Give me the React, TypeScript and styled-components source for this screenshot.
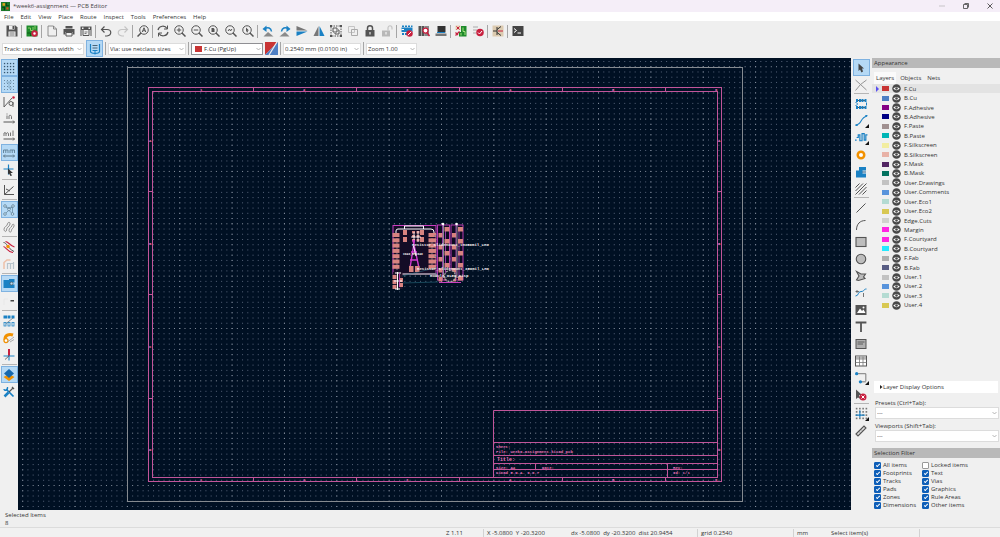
import React from 'react';
import styled, { createGlobalStyle, css } from 'styled-components';

const GlobalStyle = createGlobalStyle`
  *, *::before, *::after { box-sizing: border-box; }
  body { margin: 0; background: #efefef; }
  body, button, select, input { font-family: 'Open Sans', 'Noto Sans', sans-serif; font-size: 6px; line-height: 8px; color: #333; }
  button, select, input { margin: 0; padding: 0; border: 0; background: none; }
  ul { margin: 0; padding: 0; list-style: none; }
`;

/* ---------- icons (24 x 24 grid) ---------- */

const G = '#545454';
const L = '#c4c4c4';
const B = '#1a81c4';
const R = '#c8203f';
const O = '#f29100';

const line = (d: string, stroke = G, w = 2) => (
  <path d={d} fill="none" stroke={stroke} strokeWidth={w} />
);
const fill = (d: string, color = G) => <path d={d} fill={color} />;

const lens = (
  <>
    <circle cx="10" cy="10" r="8.500" fill="none" stroke={G} strokeWidth="2" />
    {line('M16 16L23 23', G, 3)}
  </>
);

const noEntry = (
  <>
    <circle cx="17" cy="17" r="6.5" fill={R} />
    {line('M13.5 20.5L20.5 13.5', '#fff', 2)}
  </>
);

const dots = [3, 9, 15, 21];

const icons: Record<string, React.ReactNode> = {
  save: (
    <>
      {fill('M1 1H19L23 5V23H1Z')}
      {fill('M6 1H17V9H6Z', '#efefef')}
      {fill('M13 2H16V8H13Z')}
      {fill('M5 13H19V23H5Z', '#efefef')}
      {line('M7 16H17M7 20H17', G, 1.5)}
    </>
  ),
  board: (
    <>
      {fill('M1 1H23V23H1Z', '#1d8a2b')}
      {line('M4 6H9V11H14V4M18 2V9', '#8fd16a', 2)}
      {line('M2 16H9V22', '#0c5c18', 2)}
      <circle cx="17" cy="17" r="4.5" fill="#fff" stroke={R} strokeWidth="4" />
    </>
  ),
  app: (
    <>
      {fill('M0 0H24V24H0Z', '#1d7a2b')}
      {line('M3 14H9V22M14 2V10H22', '#0b3d14', 3)}
      {fill('M4 3H11V10H4Z', '#e0a21b')}
      {fill('M14 14H20V20H14Z', '#d9531e')}
    </>
  ),
  page: <>{line('M4 2H15L21 8V22H4Z', '#777', 1.6)}{line('M15 2V8H21', '#777', 1.6)}</>,
  printer: (
    <>
      {fill('M5 2H19V7H5Z')}
      {fill('M1 8H23V19H19V14H5V19H1Z')}
      {line('M6 15H18V22H6Z', G, 2)}
    </>
  ),
  plotter: (
    <>
      {fill('M1 3H23V10H1Z')}
      {line('M2 10V22M22 10V22', G, 2)}
      {line('M6 10V21H18V10', G, 2)}
      {line('M9 14H15M9 17H13', G, 1.5)}
      {fill('M4 5H7V8H4ZM17 5H20V8H17Z', '#efefef')}
    </>
  ),
  undo: <>{line('M3 9H14C24 9 24 21 14 22H10', G, 2.4)}{line('M9 3L3 9L9 15', G, 2.4)}</>,
  redo: <>{line('M21 9H10C0 9 0 21 10 22H14', L, 2.4)}{line('M15 3L21 9L15 15', L, 2.4)}</>,
  find: (
    <>
      <circle cx="14" cy="10" r="8.500" fill="none" stroke={G} strokeWidth="2" />
      {line('M8 16L1 23', G, 3)}
      {line('M10.5 14L14 5.5L17.5 14M12 11.5H16', G, 2)}
    </>
  ),
  refresh: (
    <>
      {line('M2 10C4 1 16 0 20 7M22 14C20 23 8 24 4 17', G, 2.4)}
      {line('M21 1V8H14M3 23V16H10', G, 2)}
    </>
  ),
  zoomIn: <>{lens}{line('M5.5 10H14.5M10 5.5V14.5', G, 2)}</>,
  zoomOut: <>{lens}{line('M5.5 10H14.5', G, 2)}</>,
  zoomFit: <>{lens}{fill('M7 6H11L13 8V14H7Z')}</>,
  zoomObj: <>{lens}{line('M6 12L9 8L11 12L14 8', G, 2)}</>,
  zoomSel: <>{lens}{fill('M8 5L14 11H11L12 14L10 15L8 11Z')}</>,
  rotL: <>{fill('M3 23L23 23L12 14Z', '#8a8a8a')}{line('M5 8C12 3 18 6 19 13', B, 3)}{fill('M1 8L9 1V14Z', B)}</>,
  rotR: <>{fill('M1 23L21 23L12 14Z', '#8a8a8a')}{line('M19 8C12 3 6 6 5 13', B, 3)}{fill('M23 8L15 1V14Z', B)}</>,
  flipV: <>{fill('M1 2L23 11H1Z', '#777')}{fill('M1 22L23 13H1Z', B)}</>,
  mirror: <>{fill('M11 2V22H1Z', '#777')}{fill('M13 2V22H23Z', B)}</>,
  group: (
    <>
      <rect x="2" y="2" width="20" height="20" fill="none" stroke={G} strokeWidth="2" strokeDasharray="3 2" />
      {line('M6 6H14V14H6Z', G, 2)}
      {line('M16 10H18V18H10V16', G, 2)}
      {fill('M0 0H4V4H0ZM20 0H24V4H20ZM0 20H4V24H0ZM20 20H24V24H20Z')}
    </>
  ),
  ungroup: <>{line('M3 3H15V15H3Z', L, 2)}{line('M9 9H21V21H9Z', '#aaa', 2)}</>,
  lock: <>{line('M7 11V6C7 0 17 0 17 6V11', G, 3)}{fill('M3 10H21V23H3Z')}{fill('M11 14H13V19H11Z', '#fff')}</>,
  unlock: <>{line('M14 11V6C14 0 22 0 22 6V9', L, 2.4)}{fill('M2 11H18V23H2Z', '#b8b8b8')}{fill('M9 14H11V19H9Z', '#fff')}</>,
  fpEdit: (
    <>
      {fill('M1 5H23V14H1Z', B)}
      {fill('M2 1H6V4H2ZM8 1H12V4H8ZM14 1H18V4H14ZM20 1H23V4H20ZM2 16H6V20H2ZM8 16H12V20H8Z', B)}
      {line('M1 9H6', '#fff', 2)}
      {noEntry}
    </>
  ),
  fpLib: (
    <>
      {fill('M1 2H7V22H1ZM8 2H13V22H8Z')}
      {fill('M14 2H22V22H14Z', '#888')}
      <circle cx="15" cy="11" r="5" fill="#fff" stroke={R} strokeWidth="2.5" />
      {line('M18 15L23 22', R, 3)}
    </>
  ),
  laptop: <>{fill('M5 2H21V15H5Z', '#333')}{fill('M1 17H23V22H1Z', '#777')}{line('M4 15H20', B, 2)}</>,
  sync: (
    <>
      {fill('M1 1H11V10H1Z', '#e5d2b5')}
      {fill('M12 2H23V23H8V14H12Z', '#1d8a2b')}
      {line('M3 3L9 9M9 3L3 9', R, 2)}
      {line('M1 15L6 20M1 21L9 13', R, 2.4)}
      {line('M16 5V13H20V20M12 16V21', '#a6e07d', 2)}
    </>
  ),
  drc: (
    <>
      {line('M2 4H12M2 10H10M2 16H8', '#aaa', 2)}
      <circle cx="16" cy="15" r="7.5" fill={R} />
      {line('M12 15L15 18L20 12', '#fff', 2)}
    </>
  ),
  schematic: (
    <>
      {fill('M1 1H23V23H1Z', '#dccbb0')}
      {line('M10 4V20M10 12H2M10 9L18 3M10 15L18 21', '#333', 2)}
      {line('M12 12H22', R, 2)}
    </>
  ),
  terminal: <>{fill('M1 2H23V22H1Z', '#444')}{line('M4 7L9 11L4 15M11 16H18', '#fff', 2)}</>,
  trackWidth: <>{line('M3 2V17C3 22 21 22 21 17V2', B, 2.4)}{line('M7 5H17M7 10H17', '#4a6477', 2)}{line('M7 15H17M12 15V23', B, 2)}</>,
  grid: (
    <>
      {dots.map((x) => dots.map((y) => <rect key={`${x}-${y}`} x={x - 1.2} y={y - 1.2} width="2.6" height="2.6" fill="#35556e" />))}
    </>
  ),
  gridOver: (
    <>
      {dots.map((x) => dots.map((y) => <rect key={`${x}-${y}`} x={x - 1} y={y - 1} width="2" height="2" fill="#6d8ca3" />))}
      {line('M6 6L18 6M12 6V18L18 18', '#7ba3c0', 1.6)}
    </>
  ),
  polar: (
    <>
      {line('M2 2V22M2 22L18 4', G, 1.8)}
      <circle cx="16" cy="15" r="4" fill="none" stroke={G} strokeWidth="1.8" />
      {line('M20 12V22', G, 1.8)}
      <circle cx="21" cy="3" r="2.5" fill={R} />
    </>
  ),
  in: <>{line('M8 5V12M8 1V3M12 12V6C12 4 17 4 17 7V12', '#666', 1.8)}{line('M1 18H23', '#444', 1.8)}{line('M20 15L23 18L20 21', '#444', 1.4)}</>,
  mil: <>{line('M2 12V6C5 4 6 6 6 8V12M6 8C8 4 11 5 11 8V12M15 5V12M20 1V12', '#666', 1.8)}{line('M1 18H23', '#444', 1.8)}{line('M20 15L23 18L20 21', '#444', 1.4)}</>,
  mm: <>{line('M1 12V6H10V12M5.5 6V12M14 12V6H23V12M18.5 6V12', '#5d7f95', 1.8)}{line('M1 18H23', '#4a6477', 1.8)}{line('M4 15L1 18L4 21M20 15L23 18L20 21', '#4a6477', 1.4)}</>,
  cursor: <>{line('M11 1V21M1 10H21', B, 2.4)}{fill('M10 9L20 18H15L18 23L15 24L12 19L10 21Z', '#333')}</>,
  angle: <>{line('M3 2V21H22M3 21L21 5M6 10L14 14', G, 2)}</>,
  ratsnest: (
    <>
      {line('M5 5L18 19M19 5L5 19M5 5C10 8 14 8 19 5M19 5V18', '#5d7f95', 1.4)}
      {[[4, 4], [20, 4], [4, 20], [19, 20], [12, 11]].map(([x, y]) => (
        <circle key={`${x}-${y}`} cx={x} cy={y} r="2.6" fill="#d5eafa" stroke="#5d7f95" strokeWidth="1.6" />
      ))}
    </>
  ),
  ratsCurve: <>{line('M2 17C2 10 8 12 9 6C10 1 15 2 14 6C13 12 7 12 7 18C7 22 3 22 2 17ZM12 19C12 13 17 14 18 9C19 5 23 6 22 10C21 15 17 15 17 19C17 23 12 23 12 19Z', '#777', 1.6)}</>,
  contrast: <>{line('M1 3C8 3 8 14 22 21', G, 2)}{line('M5 1C12 2 13 9 23 12', R, 2.2)}{line('M1 11C6 12 9 22 20 23', R, 2.2)}<circle cx="10" cy="11" r="3.500" fill={O} /></>,
  netHi: <>{line('M2 22V9L8 4H15', '#edc0a8', 3)}{line('M9 22V11H20M15 22V11M21 22V8', '#b8c4cc', 2.4)}</>,
  zoneFill: <>{fill('M1 4H12V2H23V9H17V13H23V20H1Z', B)}<circle cx="17" cy="11" r="3" fill="#b7dcf5" stroke={G} strokeWidth="1.5" /></>,
  zoneOut: <>{line('M2 20V8H10', '#e5e5e5', 1.5)}{fill('M15 10H22V13H15Z', '#444')}</>,
  padSketch: <>{fill('M1 1H8V7H1ZM9 1H15V7H9ZM17 1H23V7H17Z', B)}{line('M5 18L20 6', '#777', 1.6)}<rect x="2" y="15" width="4" height="7" fill="none" stroke={B} strokeWidth="1.5" /><rect x="10" y="15" width="4" height="7" fill="none" stroke={B} strokeWidth="1.5" /><rect x="18" y="15" width="4" height="7" fill="none" stroke={B} strokeWidth="1.5" /></>,
  viaSketch: <>{line('M4 16C3 6 12 3 20 6', O, 6)}<circle cx="6" cy="17" r="4" fill="#fff" stroke={O} strokeWidth="2.5" />{line('M9 20L22 10M14 20L22 15', '#999', 1.6)}</>,
  trackSketch: <>{line('M12 0V14', R, 4)}{line('M1 14H23M12 14V23', B, 2.2)}{line('M12 14L4 21', G, 1.6)}</>,
  layersMgr: <>{fill('M12 10L23 16L12 24L1 16Z', O)}{fill('M12 0L22 9L12 18L2 9Z', '#1568ad')}</>,
  tools: <>{line('M6 6L21 21', B, 3.4)}{line('M2 6C2 10 10 10 9 2', B, 2.6)}{line('M20 4L12 12', G, 2.2)}{line('M11 13L3 21', B, 5)}{line('M18 2L22 6', G, 2.6)}</>,
  select: <>{fill('M7 3L18 13H14L16 19L13 21L10 15L7 18Z', '#444')}</>,
  ratsLocal: <>{line('M1 2L11 11L23 2M1 23L11 11L23 22', '#8a8a8a', 1.8)}</>,
  footprint: <>{line('M2 5H22M2 19H22', G, 2)}{fill('M2 2H6V8H2ZM8 2H12V8H8ZM13 2H17V8H13ZM19 2H23V8H19ZM2 16H6V22H2ZM8 16H12V22H8ZM13 16H17V22H13ZM19 16H23V22H19Z', B)}{line('M1 9C6 9 6 15 1 15M23 9V15', B, 2)}</>,
  route: <>{line('M1 20C14 21 8 6 22 4', B, 2)}{line('M5 21H1M19 3H23', B, 2)}</>,
  tune: <>{line('M0 17H3M3 12H6V7H9V18H13V5H17V17H20V7H23', B, 2.2)}</>,
  via: <circle cx="12" cy="12" r="6.5" fill="#fff" stroke={O} strokeWidth="5" />,
  zone: <>{fill('M2 23V9H8V2H22V9H15V15H22V23Z', B)}{line('M14 12H22', '#1d5f91', 2)}</>,
  keepout: <>{line('M1 9L9 1M1 16L16 1M1 23L23 1M8 23L23 8M15 23L23 15', G, 2)}</>,
  line: line('M3 21L21 3', G, 2),
  arc: line('M3 22C3 10 10 3 21 3', G, 2),
  rect: <rect x="2" y="3" width="20" height="18" fill="#bdbdbd" stroke={G} strokeWidth="2.2" />,
  circle: <circle cx="12" cy="12" r="9.5" fill="#bdbdbd" stroke={G} strokeWidth="2.2" />,
  polygon: <path d="M3 3L12 8H21L17 14L20 17L7 21L3 20L8 12Z" fill="#bdbdbd" stroke={G} strokeWidth="2.2" />,
  bezier: <>{line('M1 18C8 18 5 9 12 9C20 9 16 4 23 4', B, 2)}{line('M4 6V12M17 12V20M1 9H8', G, 1.6)}</>,
  image: <>{fill('M1 2H23V22H1Z')}{fill('M4 18L10 9L14 14L17 11L21 18Z', '#fff')}<circle cx="17" cy="7" r="2" fill="#fff" /></>,
  text: line('M3 5V3H21V5M12 3V22', G, 3.6),
  textbox: <><rect x="2" y="3" width="20" height="18" fill="#b0b0b0" stroke={G} strokeWidth="2" />{line('M5 8H19M5 12H16', '#555', 1.8)}</>,
  table: <><rect x="1" y="2" width="22" height="20" fill="#fff" stroke={G} strokeWidth="2" />{fill('M2 3H22V7H2Z', '#b5b5b5')}{line('M1 8H23M1 15H23M9 3V22M16 3V22', '#777', 1.6)}</>,
  dimension: <>{line('M3 5H20V19', '#777', 1.8)}{line('M9 20H20', '#777', 1.8)}<circle cx="3" cy="5" r="3" fill={B} /><circle cx="10" cy="20" r="3" fill={B} /></>,
  delete: <>{fill('M2 1L14 12H8L11 20L6 17L2 20Z', G)}<circle cx="16" cy="16" r="7" fill={R} />{line('M13 13L19 19M19 13L13 19', '#fff', 2)}</>,
  gridOrigin: <>{dots.map((x) => dots.map((y) => <rect key={`${x}-${y}`} x={x - 1.5} y={y - 1.5} width="3" height="3" fill="#777" />))}{line('M9 6V20M1 15H18', B, 2)}</>,
  measure: <><path d="M2 18L18 2L22 6L6 22Z" fill="#ddd" stroke={G} strokeWidth="2.2" />{line('M8 13L10 15M12 9L14 11', G, 1.6)}</>,
};

const IconSvg = styled.svg<{ $size: number }>`
  display: block;
  width: ${(p) => p.$size}px;
  height: ${(p) => p.$size}px;
`;

const Icon = ({ name, size = 12 }: { name: string; size?: number }) => (
  <IconSvg $size={size} viewBox="0 0 24 24" aria-hidden="true">
    {icons[name]}
  </IconSvg>
);

/* ---------- window chrome ---------- */

const Window = styled.div`
  display: flex;
  flex-direction: column;
  min-height: 100vh;
`;

const TitleBar = styled.header`
  display: flex;
  align-items: center;
  height: 12px;
  padding: 0 4px 0 1px;
  gap: 3px;
  background: #f5eef8;
`;

const WindowTitle = styled.span`
  flex: 1;
  color: #444;
`;

const WindowControls = styled.div`
  display: flex;
  gap: 12px;
`;

const WindowButton = styled.button`
  display: grid;
  place-items: center;
  width: 12px;
  height: 10px;
`;

const MenuBar = styled.nav`
  display: flex;
  align-items: center;
  gap: 7px;
  height: 9px;
  padding: 0 4px;
  background: #fff;
`;

const MenuItem = styled.button`
  white-space: nowrap;
`;

const Toolbars = styled.div`
  background: #efefef;
  height: 37px;
`;

const Toolbar = styled.div`
  display: flex;
  align-items: center;
  height: 20px;
  padding-left: 3px;
`;

const groupLine = css`
  &::before {
    content: '';
    width: 1px;
    height: 13px;
    margin: 0 1px;
    background: #a5a5a5;
  }
`;

const ToolGroup = styled.div<{ $divided?: boolean }>`
  display: flex;
  align-items: center;
  ${(p) => p.$divided && groupLine}
`;

const ToolButton = styled.button<{ $active?: boolean }>`
  position: relative;
  display: grid;
  place-items: center;
  flex: none;
  width: 17px;
  height: 17px;
  border: 1px solid ${(p) => (p.$active ? '#7fb2e0' : 'transparent')};
  background: ${(p) => (p.$active ? '#b5d9f5' : 'transparent')};
`;

const MoreMark = styled.i`
  position: absolute;
  right: 0;
  bottom: 0;
  border: 2px solid;
  border-color: transparent #111 #111 transparent;
`;

const OptionsBar = styled.div`
  display: flex;
  align-items: center;
  gap: 2px;
  height: 15px;
  padding: 0 2px;
`;

const Divider = styled.span`
  width: 1px;
  height: 13px;
  background: #a5a5a5;
`;

const SelectWrap = styled.div<{ $width?: number; $strong?: boolean }>`
  position: relative;
  display: flex;
  align-items: center;
  width: ${(p) => (p.$width ? `${p.$width}px` : '100%')};
  height: 12px;
  border: 1px solid ${(p) => (p.$strong ? '#8f8f93' : '#dcdcdc')};
  background: #fff;
  & > svg {
    position: absolute;
    right: 1px;
    pointer-events: none;
  }
`;

const Select = styled.select<{ $indent?: boolean }>`
  appearance: none;
  width: 100%;
  height: 10px;
  padding: 0 0 0 ${(p) => (p.$indent ? 12 : 1)}px;
  outline: 0;
`;

const SelectSwatch = styled.span`
  position: absolute;
  left: 3px;
  width: 7px;
  height: 6px;
  background: #c83434;
`;

const Chevron = () => (
  <svg width="5" height="4" viewBox="0 0 5 4" aria-hidden="true">
    <path d="M0.5 1L2.5 3L4.5 1" fill="none" stroke="#999" strokeWidth="0.7" />
  </svg>
);

const Dropdown = ({ label, value, width, swatch }: { label: string; value: string; width?: number; swatch?: boolean }) => (
  <SelectWrap $width={width} $strong={swatch}>
    {swatch && <SelectSwatch />}
    <Select id={label} aria-label={label} $indent={swatch} defaultValue={value}>
      <option>{value}</option>
    </Select>
    <Chevron />
  </SelectWrap>
);

/* ---------- workspace ---------- */

const Workspace = styled.main`
  display: flex;
  flex: 1;
`;

const SideBar = styled.div<{ $wide?: boolean }>`
  display: flex;
  flex-direction: column;
  align-items: center;
  flex: none;
  width: ${(p) => (p.$wide ? 20 : 18)}px;
  padding-top: 1px;
  background: #f0f0f0;
`;

const SideDivider = styled.span<{ $wide?: boolean }>`
  width: 15px;
  height: 1px;
  margin: ${(p) => (p.$wide ? '0 0 1px' : '1px 0')};
  background: #b5b5b5;
`;

const BoardArea = styled.div`
  position: relative;
  flex: 1;
  min-width: 0;
  background: #001023;
`;

const BoardSvg = styled.svg`
  position: absolute;
  inset: 0;
  width: 100%;
  height: 100%;
`;

const PINK = '#c2559a';

const sheetText = (x: number, y: number, s: string, size = 4) => (
  <text key={`${x}-${y}`} x={x} y={y} fontSize={size} fontWeight="700" fill="#ea74bb" fontFamily="'Liberation Mono', monospace">
    {s}
  </text>
);

const pad = (x: number, y: number, w = 5, h = 4) => (
  <rect key={`p${x}-${y}`} x={x} y={y} width={w} height={h} fill="#d88380" />
);

const silkText = (x: number, y: number, s: string, size = 4) => (
  <text x={x} y={y} fontSize={size} fontWeight="700" fill="#f3ecef" fontFamily="'Liberation Mono', monospace">
    {s}
  </text>
);

const PITCH = 5.235;

const GridDots = () => (
  <g strokeDasharray={`1 ${PITCH - 1}`}>
    {Array.from({ length: 86 }, (_, i) => {
      const y = 61.5 + i * PITCH;
      const major = i % 10 === 1;
      return <path key={i} d={`M22.200 ${y}H851`} stroke={major ? '#8a94a2' : '#56647a'} strokeWidth={1} />;
    })}
    {Array.from({ length: 16 }, (_, i) => {
      const x = 22.7 + i * PITCH * 10;
      return <path key={i} d={`M${x} 61V510`} stroke="#8a94a2" strokeWidth={1} />;
    })}
  </g>
);

const Footprints = () => (
  <g>
    <rect x="393" y="225.5" width="43" height="48.5" fill="#140c26" stroke="#c93fc0" strokeWidth="1" />
    <path d="M396 233V231Q396 229 398 229H431Q434 229 434 232V233M404.5 229V226H423.5V229" fill="none" stroke="#fff" strokeWidth="1" />
    <path d="M397 238V270M432 238V270" stroke="#cfc8d8" strokeWidth="0.5" />
    {[0, 1, 2, 3, 4, 5, 6].map((i) => pad(392.5, 233 + i * 5.3, 7, 4))}
    {[0, 1, 2, 3, 4, 5, 6].map((i) => pad(428.5, 233 + i * 5.3, 7.5, 4))}
    {[403, 420].map((x) => [230, 237].map((y) => pad(x, y, 4, 5)))}
    {[412, 416.5].map((x) => [231, 235, 239].map((y) => pad(x, y, 3, 2.5)))}
    <path d="M414 232V240M418 231V242M411 237H421" stroke="#fff" strokeWidth="0.8" />
    <path d="M414.500 240L410 268M413 240L419 268M411 252H417M410 260H418" fill="none" stroke="#d23bd0" strokeWidth="1.4" />
    <path d="M413.500 246L416 256" stroke="#fff" strokeWidth="1" />
    {pad(409, 266, 4.5, 6)}
    {pad(415, 266, 4.5, 6)}
    {silkText(403, 255, 'XIAO_RP2040', 3)}
    <path d="M397 273H436V275H397Z" fill="#8c8093" />
    <path d="M434 236L458 233M434 256L459 262M436 269L462 250M402 283L438 282M436 274L462 240M402 276L460 262" stroke="#2e7c90" strokeWidth="0.5" fill="none" />
    {[437.5, 451].map((x) => (
      <g key={x}>
        <rect x={x} y="225" width="12" height="55" fill="#0d0b22" stroke="#c93fc0" strokeWidth="0.9" />
        <path d={`M${x + 5} 225V280M${x + 8} 228V276`} stroke="#8e3aa4" strokeWidth="1" />
        <path d={`M${x + 6} 224V278`} stroke="#ddd" strokeWidth="0.6" />
        {[227, 239, 251, 263, 276].map((y) => pad(x + 7, y, 5, 4.5))}
        {[233, 245, 257, 268, 277].map((y) => pad(x + 1, y, 4, 4.5))}
        <circle cx={x + 5.5} cy="224" r="1.3" fill="#fff" />
      </g>
    ))}
    <circle cx="450" cy="276" r="5.5" fill="#101a2b" stroke="#aaa" strokeWidth="1.2" strokeDasharray="2 1" />
    <path d="M439 282.500H461" stroke="#c93fc0" strokeWidth="1" />
    {silkText(412, 246, 'Resistor_SlideMount_1M350mil_LH0')}
    {silkText(417, 270, 'Resistor_SlideMount_350mil_LH0')}
    {silkText(430, 277, 'Module_OLED_Disp')}
    <rect x="393" y="272" width="9.5" height="17" fill="#23152c" />
    {[0, 1, 2].map((i) => pad(392.5, 275 + i * 5, 4, 4))}
    {[0, 1].map((i) => pad(399, 278 + i * 5, 4, 4))}
    <path d="M397.500 272V290M395 273H401M394 281H402M395 289H400" stroke="#fff" strokeWidth="1" />
    <path d="M399.500 273V287" stroke="#c93fc0" strokeWidth="0.8" />
  </g>
);

const Board = () => (
  <BoardArea>
    <BoardSvg viewBox="18 58 833 452" preserveAspectRatio="xMidYMid slice" role="img" aria-label="Board canvas">
      <GridDots />
      <rect x="127.5" y="67.5" width="615" height="434" fill="none" stroke="#858a90" />
      <g fill="none" stroke={PINK}>
        <rect x="148.500" y="87.500" width="573" height="394" />
        <rect x="152.500" y="91.500" width="565" height="386" />
        {[253.5, 356.5, 459.5, 562.5, 665.5].map((x) => (
          <path key={x} d={`M${x} 87V91M${x} 478V482`} />
        ))}
        {[191.5, 294.5, 398.5].map((y) => (
          <path key={y} d={`M148 ${y}H152M718 ${y}H722`} />
        ))}
        <path d="M493.500 477V410.500H717M494 442.500H717M494 455.500H717M494 463.500H717M494 469.500H717M535.500 463V469M667.500 463V477" />
      </g>
      {['1', '2', '3', '4', '5', '6'].map((s, i) => [91, 481].map((y) => sheetText(200 + i * 103, y, s)))}
      {['A', 'B', 'C', 'D'].map((s, i) => [149, 718].map((x) => sheetText(x, 142 + i * 103, s)))}
      {sheetText(496, 448, 'Sheet:')}
      {sheetText(496, 453, 'File: week6-assignment.kicad_pcb')}
      {sheetText(497, 461, 'Title:', 5)}
      {sheetText(496, 469, 'Size: A4')}
      {sheetText(542, 469, 'Date:')}
      {sheetText(673, 469, 'Rev:')}
      {sheetText(496, 474, 'KiCad E.D.A. 9.0.7')}
      {sheetText(673, 474, 'Id: 1/1')}
      <Footprints />
    </BoardSvg>
  </BoardArea>
);

/* ---------- appearance panel ---------- */

const Panel = styled.aside`
  display: flex;
  flex-direction: column;
  flex: none;
  width: 129px;
  padding-left: 1px;
  background: #f0f0f0;
`;

const PanelHeader = styled.h2`
  margin: 0;
  padding: 0 2px;
  font-size: 6px;
  font-weight: 400;
  line-height: 10px;
  background: #b9b9b9;
`;

const Tabs = styled.div`
  display: flex;
  gap: 2px;
  padding: 4px 2px 0;
`;

const Tab = styled.button<{ $active?: boolean }>`
  height: 12px;
  padding: 0 2px;
  background: ${(p) => (p.$active ? '#fafafa' : 'transparent')};
`;

const LayerList = styled.ul`
  display: grid;
  grid-auto-rows: 1fr;
  height: 226px;
  flex: none;
`;

const LayerRow = styled.li<{ $active?: boolean }>`
  display: flex;
  align-items: center;
  min-height: 0;
  padding-left: 4px;
  background: ${(p) => (p.$active ? '#e3e3e3' : 'transparent')};
`;

const ActiveMark = styled.span<{ $active?: boolean }>`
  width: 6px;
  height: 6px;
  border: 3px solid transparent;
  border-left-color: ${(p) => (p.$active ? '#5a50f0' : 'transparent')};
`;

const Swatch = styled.span<{ $color: string }>`
  width: 7px;
  height: 5px;
  background: ${(p) => p.$color};
`;

const EyeButton = styled.button`
  width: 9px;
  height: 9px;
  margin: 0 3px;
`;

const PanelBody = styled.div`
  display: flex;
  flex-direction: column;
  flex: 1;
  padding-bottom: 3px;
`;

const DisplayOptions = styled.button`
  display: flex;
  align-items: center;
  height: 12px;
  margin: auto 2px 6px;
  padding-left: 5px;
  background: #fff;
`;

const Field = styled.div`
  padding: 0 1px 0 3px;
  margin-bottom: 3px;
  label { display: block; }
`;

const FilterGrid = styled.div`
  display: grid;
  grid-template-columns: 48px 1fr;
  padding: 3px 2px 1px;
`;

const CheckLabel = styled.label`
  display: flex;
  align-items: center;
  gap: 2px;
  height: 8px;
  white-space: nowrap;
`;

const CheckBox = styled.input`
  appearance: none;
  display: grid;
  place-items: center;
  width: 7px;
  height: 7px;
  border: 1px solid #999;
  border-radius: 1px;
  background: #fff;
  &:checked { background: #0f5fb8; border-color: #0f5fb8; }
  &:checked::after {
    content: '';
    width: 4px;
    height: 2px;
    border: solid #fff;
    border-width: 0 0 1px 1px;
    transform: rotate(-45deg);
  }
`;

const layers: [string, string][] = [
  ['F.Cu', '#c83434'], ['B.Cu', '#4d7fc4'], ['F.Adhesive', '#840084'], ['B.Adhesive', '#000084'],
  ['F.Paste', '#a09090'], ['B.Paste', '#00b5b5'], ['F.Silkscreen', '#f2eda1'], ['B.Silkscreen', '#e8b2a7'],
  ['F.Mask', '#532663'], ['B.Mask', '#02725f'], ['User.Drawings', '#c2c2c2'], ['User.Comments', '#5994dc'],
  ['User.Eco1', '#b4dbd2'], ['User.Eco2', '#d8c852'], ['Edge.Cuts', '#d0d2cd'], ['Margin', '#ff26e2'],
  ['F.Courtyard', '#ff26e2'], ['B.Courtyard', '#26e9ff'], ['F.Fab', '#afafaf'], ['B.Fab', '#585d84'],
  ['User.1', '#c2c2c2'], ['User.2', '#5994dc'], ['User.3', '#b4dbd2'], ['User.4', '#d8c852'],
];

const filters = [
  'All items', 'Locked items', 'Footprints', 'Text', 'Tracks', 'Vias',
  'Pads', 'Graphics', 'Zones', 'Rule Areas', 'Dimensions', 'Other items',
];

const Eye = () => (
  <svg width="9" height="9" viewBox="0 0 18 18" aria-hidden="true">
    <circle cx="9" cy="9" r="8.500" fill="#4a4a4a" />
    <path d="M2.500 9Q9 2.500 15.500 9Q9 15.500 2.500 9Z" fill="#fff" />
    <circle cx="9" cy="9" r="2.600" fill="#4a4a4a" />
  </svg>
);

/* ---------- footer ---------- */

const MessagePanel = styled.section`
  height: 18px;
  padding: 1px 5px;
  border-bottom: 1px solid #dcdcdc;
  background: #efefef;
`;

const StatusBar = styled.footer`
  display: grid;
  grid-template-columns: 443fr 41fr 84fr 130fr 96fr 34fr 92fr 80fr;
  height: 9px;
  padding-top: 1px;
  background: #f1f1f1;
  white-space: pre;
`;

const StatusCell = styled.span<{ $line?: boolean }>`
  padding-left: 3px;
  border-right: 1px solid ${(p) => (p.$line ? '#d2d2d2' : 'transparent')};
`;

const topGroups = [
  ['save'], ['board'], ['page', 'printer', 'plotter'], ['undo', 'redo'], ['find'],
  ['refresh', 'zoomIn', 'zoomOut', 'zoomFit', 'zoomObj', 'zoomSel'],
  ['rotL', 'rotR', 'flipV', 'mirror', 'group', 'ungroup', 'lock', 'unlock'],
  ['fpEdit', 'fpLib', 'laptop'], ['sync', 'drc'], ['schematic'], ['terminal'],
];

const leftGroups = [
  ['grid', 'gridOver', 'polar', 'in', 'mil', 'mm', 'cursor'], ['angle'], ['ratsnest', 'ratsCurve'],
  ['contrast', 'netHi'], ['zoneFill', 'zoneOut'], ['padSketch', 'viaSketch', 'trackSketch'], ['layersMgr', 'tools'],
];

const rightGroups = [
  ['select', 'ratsLocal'], ['footprint', 'route', 'tune', 'via', 'zone', 'keepout'],
  ['line', 'arc', 'rect', 'circle', 'polygon', 'bezier', 'image', 'text', 'textbox', 'table', 'dimension', 'delete'],
  ['gridOrigin', 'measure'],
];

const active = new Set(['grid', 'gridOver', 'mm', 'ratsnest', 'zoneFill', 'layersMgr', 'select']);
const withMore = new Set(['route', 'tune', 'dimension', 'gridOrigin']);

const Tools = ({ names }: { names: string[] }) => (
  <>
    {names.map((n) => (
      <ToolButton key={n} $active={active.has(n)} aria-label={n}>
        <Icon name={n} size={withMore.has(n) ? 13 : 12} />
        {withMore.has(n) && <MoreMark />}
      </ToolButton>
    ))}
  </>
);

const SideTools = ({ groups, wide }: { groups: string[][]; wide?: boolean }) => (
  <SideBar $wide={wide}>
    {groups.map((g, i) => (
      <React.Fragment key={g[0]}>
        {i > 0 && <SideDivider $wide={wide} />}
        <Tools names={g} />
      </React.Fragment>
    ))}
  </SideBar>
);

export default function App() {
  return (
    <Window>
      <GlobalStyle />
      <TitleBar>
        <Icon name="app" size={9} />
        <WindowTitle>*week6-assignment — PCB Editor</WindowTitle>
        <WindowControls>
          <WindowButton aria-label="Minimize">
            <svg width="6" height="6" viewBox="0 0 6 6"><path d="M0 3H6" stroke="#aaa" strokeWidth="0.6" /></svg>
          </WindowButton>
          <WindowButton aria-label="Restore">
            <svg width="6" height="6" viewBox="0 0 6 6"><path d="M0.500 1.500H4.500V5.500H0.500ZM1.500 0.500H5.500V4.500" fill="none" stroke="#444" strokeWidth="0.8" /></svg>
          </WindowButton>
          <WindowButton aria-label="Close">
            <svg width="6" height="6" viewBox="0 0 6 6"><path d="M0.500 0.500L5.500 5.500M5.500 0.500L0.500 5.500" stroke="#333" strokeWidth="0.8" /></svg>
          </WindowButton>
        </WindowControls>
      </TitleBar>
      <MenuBar>
        {['File', 'Edit', 'View', 'Place', 'Route', 'Inspect', 'Tools', 'Preferences', 'Help'].map((m) => (
          <MenuItem key={m}>{m}</MenuItem>
        ))}
      </MenuBar>
      <Toolbars>
        <Toolbar>
          {topGroups.map((g, i) => (
            <ToolGroup key={g[0]} $divided={i > 0}>
              <Tools names={g} />
            </ToolGroup>
          ))}
        </Toolbar>
        <OptionsBar>
          <Dropdown label="Track width" value="Track: use netclass width" width={82} />
          <ToolButton $active aria-label="Use existing track width"><Icon name="trackWidth" /></ToolButton>
          <Divider />
          <Dropdown label="Via size" value="Via: use netclass sizes" width={78} />
          <Divider />
          <Dropdown label="Active layer" value="F.Cu (PgUp)" width={72} swatch />
          <svg width="13" height="13" viewBox="0 0 13 13" role="img" aria-label="Layer pair">
            <path d="M0 0H13L0 13Z" fill="#c83434" />
            <path d="M13 0V13H0Z" fill="#4d7fc4" />
            <path d="M12 0L4 13" stroke="#eee" strokeWidth="1.200" />
          </svg>
          <Divider />
          <Dropdown label="Grid" value="0.2540 mm (0.0100 in)" width={78} />
          <Divider />
          <Dropdown label="Zoom" value="Zoom 1.00" width={51} />
        </OptionsBar>
      </Toolbars>
      <Workspace>
        <SideTools groups={leftGroups} />
        <Board />
        <SideTools groups={rightGroups} wide />
        <Panel>
          <PanelHeader>Appearance</PanelHeader>
          <PanelBody>
            <Tabs role="tablist">
              <Tab role="tab" $active>Layers</Tab>
              <Tab role="tab">Objects</Tab>
              <Tab role="tab">Nets</Tab>
            </Tabs>
            <LayerList>
              {layers.map(([name, color], i) => (
                <LayerRow key={name} $active={i === 0}>
                  <ActiveMark $active={i === 0} />
                  <Swatch $color={color} />
                  <EyeButton aria-label={`Toggle ${name}`}><Eye /></EyeButton>
                  {name}
                </LayerRow>
              ))}
            </LayerList>
            <DisplayOptions>
              <svg width="4" height="4" viewBox="0 0 4 4" aria-hidden="true"><path d="M1 0L3.500 2L1 4Z" fill="#222" /></svg>
              Layer Display Options
            </DisplayOptions>
            <Field>
              <label htmlFor="presets">Presets (Ctrl+Tab):</label>
              <Dropdown label="presets" value="---" />
            </Field>
            <Field>
              <label htmlFor="viewports">Viewports (Shift+Tab):</label>
              <Dropdown label="viewports" value="---" />
            </Field>
          </PanelBody>
          <PanelHeader>Selection Filter</PanelHeader>
          <FilterGrid>
            {filters.map((f) => (
              <CheckLabel key={f}>
                <CheckBox type="checkbox" defaultChecked={f !== 'Locked items'} />
                {f}
              </CheckLabel>
            ))}
          </FilterGrid>
        </Panel>
      </Workspace>
      <MessagePanel>
        <div>Selected Items</div>
        <div>8</div>
      </MessagePanel>
      <StatusBar>
        <StatusCell />
        <StatusCell $line>Z 1.11</StatusCell>
        <StatusCell>X -5.0800  Y -20.3200</StatusCell>
        <StatusCell $line>dx -5.0800  dy -20.3200  dist 20.9454</StatusCell>
        <StatusCell $line>grid 0.2540</StatusCell>
        <StatusCell>mm</StatusCell>
        <StatusCell $line>Select item(s)</StatusCell>
        <StatusCell />
      </StatusBar>
    </Window>
  );
}
